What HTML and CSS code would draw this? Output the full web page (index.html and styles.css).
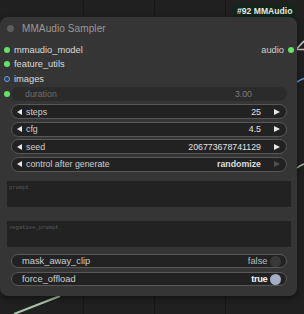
FILE: index.html
```html
<!DOCTYPE html>
<html lang="en">
<head>
    <meta charset="UTF-8">
    <title>MMAudio Sampler</title>
    <link rel="stylesheet" href="styles.css">
</head>
<body>

<div class="canvas">
    <svg class="wires" width="304" height="314" viewBox="0 0 304 314">
        <path d="M294 49.5 H304 M296 49.5 L304 41" stroke="#c8c8c8" stroke-width="1.6" fill="none"/>
        <path d="M297 82 Q300 80 304 78.5" stroke="#5b9be0" stroke-width="1.6" fill="none"/>
        <path d="M297 168 Q300 165.5 304 164" stroke="#9cc49c" stroke-width="1.4" fill="none"/>
        <path d="M14 314 L60 296" stroke="#a9c6a9" stroke-width="2" fill="none"/>
    </svg>

    <div class="badge">#92 MMAudio</div>

    <div class="node">
        <div class="node-title"><span class="title-dot"></span>MMAudio Sampler</div>

        <div class="slots">
            <div class="slot">
                <span class="dot"></span>
                <span class="slot-name">mmaudio_model</span>
                <span class="slot-out">audio<span class="dot"></span></span>
            </div>
            <div class="slot">
                <span class="dot"></span>
                <span class="slot-name">feature_utils</span>
            </div>
            <div class="slot">
                <span class="dot dot-ring"></span>
                <span class="slot-name">images</span>
            </div>
        </div>

        <div class="widget-row">
            <span class="dot"></span>
            <div class="widget widget-off">
                <span class="w-label">duration</span>
                <span class="w-value">3.00</span>
            </div>
        </div>

        <div class="widget">
            <span class="arrow-left"></span>
            <span class="w-label">steps</span>
            <span class="w-value">25</span>
            <span class="arrow-right"></span>
        </div>
        <div class="widget">
            <span class="arrow-left"></span>
            <span class="w-label">cfg</span>
            <span class="w-value">4.5</span>
            <span class="arrow-right"></span>
        </div>
        <div class="widget">
            <span class="arrow-left"></span>
            <span class="w-label">seed</span>
            <span class="w-value">206773678741129</span>
            <span class="arrow-right"></span>
        </div>
        <div class="widget">
            <span class="arrow-left"></span>
            <span class="w-label">control after generate</span>
            <span class="w-value w-bold">randomize</span>
            <span class="arrow-right arrow-dim"></span>
        </div>

        <div class="textbox textbox-first">prompt</div>
        <div class="textbox textbox-second">negative_prompt</div>

        <div class="toggle toggle-first">
            <span class="t-label">mask_away_clip</span>
            <span class="t-value">false</span>
            <span class="knob"></span>
        </div>
        <div class="toggle">
            <span class="t-label">force_offload</span>
            <span class="t-value t-on">true</span>
            <span class="knob knob-on"></span>
        </div>
    </div>
</div>

</body>
</html>
```

FILE: styles.css
```css
body {
    margin: 0;
    padding: 0;
    font-family: 'Liberation Sans', Arial, sans-serif;
    background: #1f1f1f;
}

.canvas {
    position: relative;
    width: 304px;
    height: 314px;
    overflow: hidden;
    background-color: #202020;
    background-image:
        linear-gradient(#171717, #171717),
        linear-gradient(#171717, #171717),
        linear-gradient(#171717, #171717);
    background-size: 1px 100%;
    background-position: 83px 0, 154px 0, 225px 0;
    background-repeat: no-repeat;
}

.wires {
    position: absolute;
    left: 0;
    top: 0;
}

.badge {
    position: absolute;
    left: 233px;
    top: 5px;
    height: 13px;
    padding: 0 3px 0 4px;
    background: #0f2619;
    color: #e8e8e8;
    font-size: 8.6px;
    font-weight: bold;
    line-height: 13px;
    border-radius: 2px;
}

.node {
    position: absolute;
    left: 0;
    top: 17px;
    width: 297px;
    height: 279px;
    box-sizing: border-box;
    background: #353535;
    border-radius: 8px;
    box-shadow: 0 2px 6px rgba(0, 0, 0, 0.5);
    padding-bottom: 10px;
}

.node-title {
    height: 22px;
    display: flex;
    align-items: center;
    padding-left: 6.5px;
    color: #9a9a9a;
    font-size: 10px;
    letter-spacing: 0.1px;
}

.title-dot {
    width: 7px;
    height: 7px;
    border-radius: 50%;
    background: #5e5e5e;
    margin-right: 8.5px;
}

.slots {
    margin-top: 3.5px;
}

.slot {
    height: 14.5px;
    display: flex;
    align-items: center;
    padding-left: 4px;
    font-size: 9.3px;
    color: #dcdcdc;
}

.dot {
    width: 6px;
    height: 6px;
    border-radius: 50%;
    background: #66e066;
    flex-shrink: 0;
}

.dot-ring {
    box-sizing: border-box;
    background: #2c3e55;
    border: 1.6px solid #6aa6ea;
}

.slot-name {
    margin-left: 4px;
}

.slot-out {
    margin-left: auto;
    margin-right: 3px;
    display: flex;
    align-items: center;
    gap: 4px;
    color: #cfcfcf;
}

.widget-row {
    margin-top: 1px;
    height: 13.5px;
    display: flex;
    align-items: center;
    padding-left: 4px;
    margin-right: 10px;
}

.widget-row .widget {
    flex: 1;
    margin: 0 0 0 0.5px;
}

.widget {
    height: 15px;
    box-sizing: border-box;
    margin: 2.5px 10px 0 10.5px;
    border: 1px solid #585858;
    border-radius: 8px;
    background: #222;
    display: flex;
    align-items: center;
    padding: 0 6px 0 5.5px;
    font-size: 8.8px;
    color: #cfcfcf;
}

.widget-row + .widget {
    margin-top: 3.5px;
}

.widget-off {
    height: 13.5px;
    border: none;
    background: #2b2b2b;
    padding-left: 10.5px;
    padding-right: 35px;
    color: #6e6e6e;
}

.w-label {
    margin-left: 4px;
}

.w-value {
    margin-left: auto;
    color: #e2e2e2;
}

.widget-off .w-value {
    color: #7c7c7c;
}

.w-bold {
    font-weight: bold;
    color: #dedede;
}

.arrow-left {
    width: 0;
    height: 0;
    border-top: 3.5px solid transparent;
    border-bottom: 3.5px solid transparent;
    border-right: 5.5px solid #e6e6e6;
}

.arrow-right {
    width: 0;
    height: 0;
    margin-left: 13px;
    border-top: 3.5px solid transparent;
    border-bottom: 3.5px solid transparent;
    border-left: 6px solid #e6e6e6;
}

.arrow-dim {
    border-left-color: #4f4f4f;
}

.textbox {
    height: 26px;
    margin: 0 6px 0 7px;
    background: #222;
    box-sizing: border-box;
    padding: 3px 2px;
    font-family: 'Liberation Mono', monospace;
    font-size: 5.5px;
    color: #5c5c5c;
}

.textbox-first {
    margin-top: 9.5px;
}

.textbox-second {
    margin-top: 14px;
}

.toggle {
    height: 14px;
    box-sizing: border-box;
    margin: 4px 10px 0 10.5px;
    border: 1px solid #585858;
    border-radius: 8px;
    background: #222;
    display: flex;
    align-items: center;
    padding: 0 5px 0 10.5px;
    font-size: 9.3px;
    color: #cfcfcf;
}

.toggle-first {
    margin-top: 7px;
}

.t-value {
    margin-left: auto;
    margin-right: 2.5px;
    color: #bdbdbd;
}

.t-on {
    font-weight: bold;
    color: #f2f2f2;
    letter-spacing: -0.3px;
}

.knob {
    width: 11px;
    height: 11px;
    border-radius: 50%;
    background: #383838;
}

.knob-on {
    background: #a4acc6;
}
```
